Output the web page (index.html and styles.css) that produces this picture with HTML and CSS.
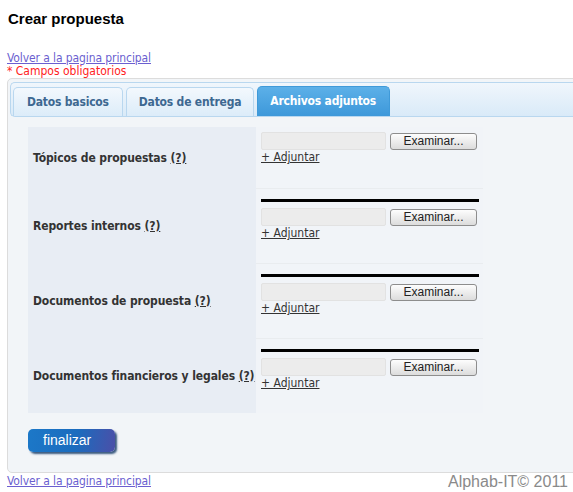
FILE: index.html
```html
<!DOCTYPE html>
<html lang="es">
<head>
    <meta charset="UTF-8">
    <title>Crear propuesta</title>
    <link rel="stylesheet" href="styles.css">
</head>
<body>
    <h1 class="title">Crear propuesta</h1>

    <div class="top-links">
        <a href="#" class="back-link">Volver a la pagina principal</a>
        <p class="required">* Campos obligatorios</p>
    </div>

    <div class="panel">
        <ul class="tabs">
            <li class="tab">Datos basicos</li>
            <li class="tab">Datos de entrega</li>
            <li class="tab active">Archivos adjuntos</li>
        </ul>

        <div class="panel-body">
            <div class="files">
                <div class="file-label"><span>Tópicos de propuestas <a href="#">(?)</a></span></div>
                <div class="file-cell first">
                    <div class="file-input">
                        <span class="file-name"></span>
                        <button class="browse">Examinar...</button>
                    </div>
                    <a href="#" class="attach">+ Adjuntar</a>
                </div>

                <div class="file-label"><span>Reportes internos <a href="#">(?)</a></span></div>
                <div class="file-cell">
                    <div class="bar"></div>
                    <div class="file-input">
                        <span class="file-name"></span>
                        <button class="browse">Examinar...</button>
                    </div>
                    <a href="#" class="attach">+ Adjuntar</a>
                </div>

                <div class="file-label"><span>Documentos de propuesta <a href="#">(?)</a></span></div>
                <div class="file-cell">
                    <div class="bar"></div>
                    <div class="file-input">
                        <span class="file-name"></span>
                        <button class="browse">Examinar...</button>
                    </div>
                    <a href="#" class="attach">+ Adjuntar</a>
                </div>

                <div class="file-label"><span>Documentos financieros y legales <a href="#">(?)</a></span></div>
                <div class="file-cell">
                    <div class="bar"></div>
                    <div class="file-input">
                        <span class="file-name"></span>
                        <button class="browse">Examinar...</button>
                    </div>
                    <a href="#" class="attach">+ Adjuntar</a>
                </div>
            </div>

            <button class="finish">finalizar</button>
        </div>
    </div>

    <div class="footer">
        <a href="#" class="back-link">Volver a la pagina principal</a>
        <span class="copyright">Alphab-IT© 2011</span>
    </div>
</body>
</html>
```

FILE: styles.css
```css
body {
    margin: 0;
    padding: 0 0 0 7px;
    font-family: "DejaVu Sans Condensed", "DejaVu Sans", Verdana, sans-serif;
    font-size: 12px;
    background: #fff;
    overflow: hidden;
}

.title {
    font-family: "Liberation Sans", Arial, sans-serif;
    font-size: 15px;
    line-height: 18px;
    font-weight: bold;
    margin: 10px 0 0 1px;
    color: #000;
}

.top-links {
    margin-top: 24px;
    line-height: 13px;
}

.back-link {
    color: #6b5fd0;
    letter-spacing: -0.1px;
}

.required {
    margin: 0;
    color: #f22;
}

.panel {
    margin-right: -12px;
    border: 1px solid #dcdcdc;
    border-radius: 5px;
    padding: 3px 0 0 2px;
    background: #f2f5f8;
}

.tabs {
    list-style: none;
    margin: 0;
    padding: 3px 0 0 2px;
    height: 30px;
    display: flex;
    align-items: flex-end;
    gap: 3px;
    border: 1px solid #b9d7ef;
    border-right: none;
    border-radius: 5px 0 0 5px;
    background: linear-gradient(#f0f6fc, #d9eaf8);
}

.tab {
    height: 28px;
    line-height: 28px;
    padding: 0 13px 0 13px;
    font-weight: bold;
    letter-spacing: -0.2px;
    color: #3d6891;
    border: 1px solid #b9d7ef;
    border-bottom: none;
    border-radius: 5px 5px 0 0;
    background: linear-gradient(#f3f8fd, #dcecf9);
}

.tab + .tab {
    padding: 0 12px;
}

.tab.active {
    height: 29px;
    padding: 0 13px 0 12px;
    color: #fff;
    border-color: #3f9ad9;
    background: linear-gradient(#5cb0e8, #3d98da);
}

.panel-body {
    padding: 10px 0 20px 18px;
}

.files {
    display: grid;
    grid-template-columns: 228px 227px;
    grid-auto-rows: 75px;
    grid-template-rows: 61px;
}

.file-label {
    display: flex;
    align-items: center;
    padding-left: 5px;
    white-space: nowrap;
    background: #e8edf4;
    font-weight: bold;
    letter-spacing: -0.1px;
    color: #333;
}

.file-label a {
    color: #333;
}

.file-cell {
    padding: 10px 0 0 5px;
    background: #f1f4f8;
    border-top: 1px solid #e9ecef;
}

.file-cell.first {
    padding-top: 5px;
    border-top: none;
}

.bar {
    width: 218px;
    height: 3px;
    margin-bottom: 6px;
    background: #000;
}

.file-input {
    display: flex;
    align-items: center;
    gap: 4px;
}

.file-name {
    width: 125px;
    height: 18px;
    box-sizing: border-box;
    border: 1px solid #e2e2e2;
    border-radius: 2px;
    background: #ececec;
}

.browse {
    width: 87px;
    height: 17px;
    padding: 0;
    font-family: "Liberation Sans", Arial, sans-serif;
    font-size: 12px;
    color: #222;
    border: 1px solid #8d8d8d;
    border-radius: 3px;
    background: linear-gradient(#fdfdfd, #dcdcdc);
}

.attach {
    display: inline-block;
    margin-top: 1px;
    line-height: 13px;
    color: #333;
}

.finish {
    display: block;
    margin-top: 16px;
    width: 87px;
    height: 23px;
    padding: 0 0 2px 15px;
    text-align: left;
    font-family: "Liberation Sans", Arial, sans-serif;
    font-size: 14px;
    color: #fff;
    border: none;
    border-radius: 5px;
    background: linear-gradient(100deg, #1c78c8 0%, #1b6cbe 55%, #4b4fa8 100%);
    box-shadow: 2px 2px 2px #3a5a80;
}

.footer {
    display: flex;
    justify-content: space-between;
    align-items: flex-start;
    padding-right: 5px;
    line-height: 14px;
}

.footer .back-link {
    margin-top: 1px;
}

.copyright {
    font-family: "Liberation Sans", Arial, sans-serif;
    font-size: 16px;
    line-height: 18px;
    color: #8a8a8a;
}
```
